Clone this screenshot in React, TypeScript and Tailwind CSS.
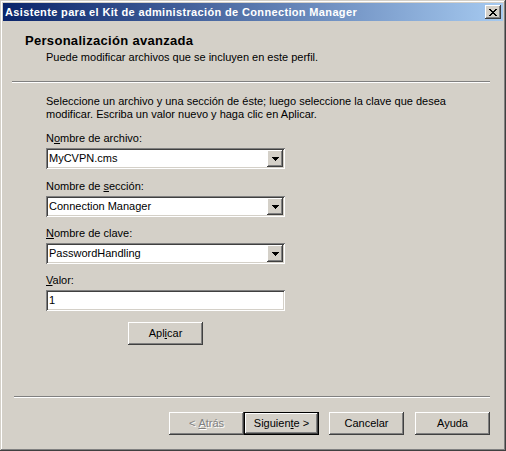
import React from "react";

const raised =
  "shadow-[inset_-1px_-1px_#404040,inset_1px_1px_#ffffff,inset_-2px_-2px_#808080,inset_2px_2px_#d4d0c8]";
const sunken =
  "shadow-[inset_1px_1px_#808080,inset_-1px_-1px_#ffffff,inset_2px_2px_#404040,inset_-2px_-2px_#d4d0c8]";

function CloseGlyph() {
  return (
    <svg width="8" height="7" viewBox="0 0 8 7" shapeRendering="crispEdges">
      <path
        d="M0 0h2v1H0zM6 0h2v1H6zM1 1h2v1H1zM5 1h2v1H5zM2 2h4v1H2zM3 3h2v1H3zM2 4h4v1H2zM1 5h2v1H1zM5 5h2v1H5zM0 6h2v1H0zM6 6h2v1H6z"
        fill="#000"
      />
    </svg>
  );
}

function ArrowDown() {
  return (
    <svg width="7" height="4" viewBox="0 0 7 4" shapeRendering="crispEdges">
      <path d="M0 0h7v1H0zM1 1h5v1H1zM2 2h3v1H2zM3 3h1v1H3z" fill="#000" />
    </svg>
  );
}

function Combo({ value }: { value: string }) {
  return (
    <div className={`flex h-[21px] w-[239px] bg-white p-[2px] ${sunken}`}>
      <div className="flex-1 pl-[1px] leading-[17px] text-black">{value}</div>
      <div className={`flex h-[17px] w-[16px] items-center justify-center bg-[#d4d0c8] ${raised}`}>
        <ArrowDown />
      </div>
    </div>
  );
}

function Label({ children }: { children: React.ReactNode }) {
  return <div className="h-[13px] leading-[13px]">{children}</div>;
}

function Btn({
  children,
  isDefault,
  disabled,
  className = "",
}: {
  children: React.ReactNode;
  isDefault?: boolean;
  disabled?: boolean;
  className?: string;
}) {
  const body = (
    <div
      className={`flex h-full w-full items-center justify-center bg-[#d4d0c8] ${raised} ${
        disabled ? "text-[#808080] [text-shadow:1px_1px_#ffffff]" : "text-black"
      }`}
    >
      {children}
    </div>
  );
  if (isDefault) {
    return <div className={`h-[23px] w-[75px] border border-black ${className}`}>{body}</div>;
  }
  return <div className={`h-[23px] w-[75px] ${className}`}>{body}</div>;
}

export default function App() {
  return (
    <div
      className={`flex h-[451px] w-[506px] flex-col bg-[#d4d0c8] p-[3px] font-['Liberation_Sans',Arial,sans-serif] text-[11px] text-black ${"shadow-[inset_-1px_-1px_#404040,inset_1px_1px_#d4d0c8,inset_-2px_-2px_#808080,inset_2px_2px_#ffffff]"}`}
    >
      {/* title bar */}
      <div className="flex h-[18px] items-center bg-[linear-gradient(to_right,#0a246a,#a6caf0)] pl-[2px] pr-[2px]">
        <div className="flex-1 font-bold leading-[18px] tracking-[0.35px] text-white">
          Asistente para el Kit de administración de Connection Manager
        </div>
        <div className={`flex h-[14px] w-[16px] items-center justify-center bg-[#d4d0c8] ${raised}`}>
          <CloseGlyph />
        </div>
      </div>

      {/* header */}
      <div className="ml-[22px] mt-[12px] text-[13px] font-bold leading-[16px] tracking-[0.3px]">
        Personalización avanzada
      </div>
      <div className="ml-[43px] mt-[2px] leading-[13px]">Puede modificar archivos que se incluyen en este perfil.</div>
      <div className="ml-[9px] mr-[13px] mt-[17px] h-[2px] border-t border-b border-t-[#808080] border-b-white" />

      {/* body */}
      <div className="ml-[43px] mt-[12px] flex flex-col">
        <div className="leading-[13px]">
          Seleccione un archivo y una sección de éste; luego seleccione la clave que desea
          <br />
          modificar. Escriba un valor nuevo y haga clic en Aplicar.
        </div>

        <div className="mt-[11px] flex w-[239px] flex-col">
          <Label>
            N<u>o</u>mbre de archivo:
          </Label>
          <div className="mt-[3px]">
            <Combo value="MyCVPN.cms" />
          </div>

          <div className="mt-[11px]">
            <Label>
              Nombre de <u>s</u>ección:
            </Label>
          </div>
          <div className="mt-[3px]">
            <Combo value="Connection Manager" />
          </div>

          <div className="mt-[10px]">
            <Label>
              <u>N</u>ombre de clave:
            </Label>
          </div>
          <div className="mt-[3px]">
            <Combo value="PasswordHandling" />
          </div>

          <div className="mt-[10px]">
            <Label>
              <u>V</u>alor:
            </Label>
          </div>
          <div className={`mt-[3px] h-[21px] w-[239px] bg-white p-[2px] ${sunken}`}>
            <div className="pl-[1px] leading-[17px]">1</div>
          </div>

          <div className="mt-[11px] flex justify-center">
            <Btn>
              Apl<u>i</u>car
            </Btn>
          </div>
        </div>
      </div>

      {/* footer */}
      <div className="ml-[11px] mr-[13px] mt-[51px] h-[2px] border-t border-b border-t-[#808080] border-b-white" />
      <div className="mt-[14px] flex pr-[13px] justify-end">
        <Btn disabled>
          &lt;&nbsp;<u>A</u>trás
        </Btn>
        <Btn isDefault>
          Siguien<u>t</u>e &gt;
        </Btn>
        <Btn className="ml-[10px]">Cancelar</Btn>
        <Btn className="ml-[11px]">Ayuda</Btn>
      </div>
    </div>
  );
}
